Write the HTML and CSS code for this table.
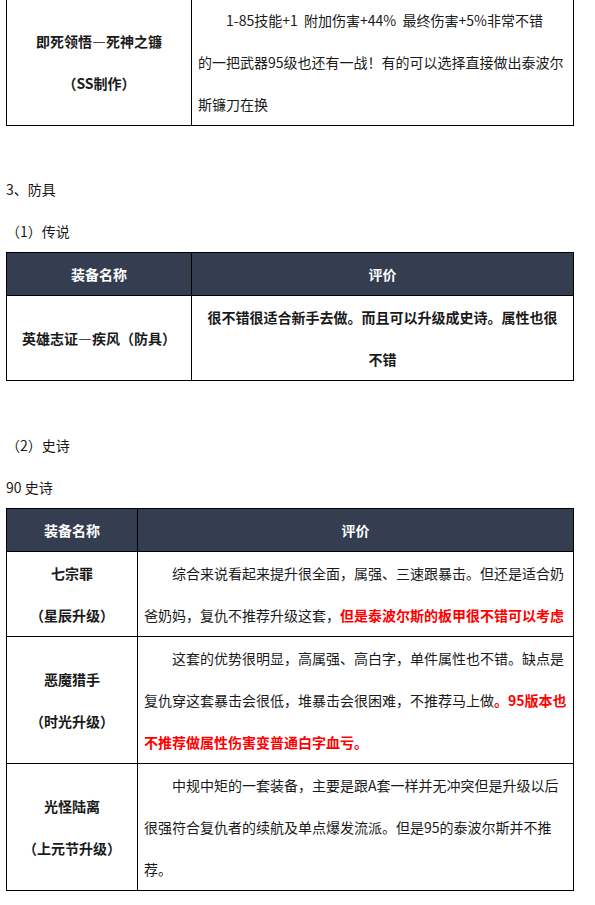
FILE: index.html
```html
<!DOCTYPE html>
<html lang="zh-CN">
<head>
<meta charset="utf-8">
<title>装备评价</title>
<link rel="stylesheet" href="styles.css">
</head>
<body>
<div class="page">
  <table class="eq eq-first">
    <colgroup><col class="c-wide"><col></colgroup>
    <tr>
      <td class="name">即死领悟—死神之镰<br>（SS制作）</td>
      <td class="desc"><p class="ind">1-85技能+1&nbsp; 附加伤害+44%&nbsp; 最终伤害+5%非常不错<br>的一把武器95级也还有一战！有的可以选择直接做出泰波尔<br>斯镰刀在换</p></td>
    </tr>
  </table>

  <p class="blank"></p>
  <p class="txt">3、防具</p>
  <p class="txt">（1）传说</p>

  <table class="eq">
    <colgroup><col class="c-wide"><col></colgroup>
    <tr class="head">
      <th>装备名称</th>
      <th>评价</th>
    </tr>
    <tr>
      <td class="name">英雄志证—疾风（防具）</td>
      <td class="desc center bold">很不错很适合新手去做。而且可以升级成史诗。属性也很<br>不错</td>
    </tr>
  </table>

  <p class="blank blank2"></p>
  <p class="txt">（2）史诗</p>
  <p class="txt">90 史诗</p>

  <table class="eq">
    <colgroup><col class="c-narrow"><col></colgroup>
    <tr class="head">
      <th>装备名称</th>
      <th>评价</th>
    </tr>
    <tr>
      <td class="name">七宗罪<br>（星辰升级）</td>
      <td class="desc"><p class="ind">综合来说看起来提升很全面，属强、三速跟暴击。但还是适合奶<br>爸奶妈，复仇不推荐升级这套，<span class="hot">但是泰波尔斯的板甲很不错可以考虑</span></p></td>
    </tr>
    <tr>
      <td class="name">恶魔猎手<br>（时光升级）</td>
      <td class="desc"><p class="ind">这套的优势很明显，高属强、高白字，单件属性也不错。缺点是<br>复仇穿这套暴击会很低，堆暴击会很困难，不推荐马上做<span class="hot">。95版本也<br>不推荐做属性伤害变普通白字血亏。</span></p></td>
    </tr>
    <tr>
      <td class="name">光怪陆离<br>（上元节升级）</td>
      <td class="desc"><p class="ind">中规中矩的一套装备，主要是跟A套一样并无冲突但是升级以后<br>很强符合复仇者的续航及单点爆发流派。但是95的泰波尔斯并不推<br>荐。</p></td>
    </tr>
  </table>
</div>
</body>
</html>
```

FILE: styles.css
```css
html, body {
  margin: 0;
  padding: 0;
  background: #ffffff;
}

body {
  font-family: "Noto Sans CJK SC", "Microsoft YaHei", sans-serif;
  font-size: 14px;
  line-height: 42px;
  color: #1a1a1a;
}

.page {
  width: 568px;
  margin-left: 6px;
}

.txt {
  margin: 0;
  height: 42px;
  white-space: nowrap;
}

.blank {
  margin: 0;
  height: 42px;
}

.blank2 {
  height: 43px;
}

.eq {
  width: 568px;
  border-collapse: collapse;
  table-layout: fixed;
  border: 1px solid #000;
}

.eq-first {
  margin-top: -2px;
}

.c-wide {
  width: 185px;
}

.c-narrow {
  width: 131px;
}

.eq th,
.eq td {
  border: 1px solid #000;
  padding: 0 6px;
  line-height: 42px;
  vertical-align: middle;
  white-space: nowrap;
}

.head th {
  background: #343e50;
  color: #ffffff;
  font-weight: bold;
  text-align: center;
}

.name {
  text-align: center;
  font-weight: bold;
}

.desc {
  text-align: left;
}

.desc p {
  margin: 0;
}

.ind {
  text-indent: 2em;
}

.center {
  text-align: center;
}

.bold {
  font-weight: bold;
}

.hot {
  color: #ff0000;
  font-weight: bold;
}
```
